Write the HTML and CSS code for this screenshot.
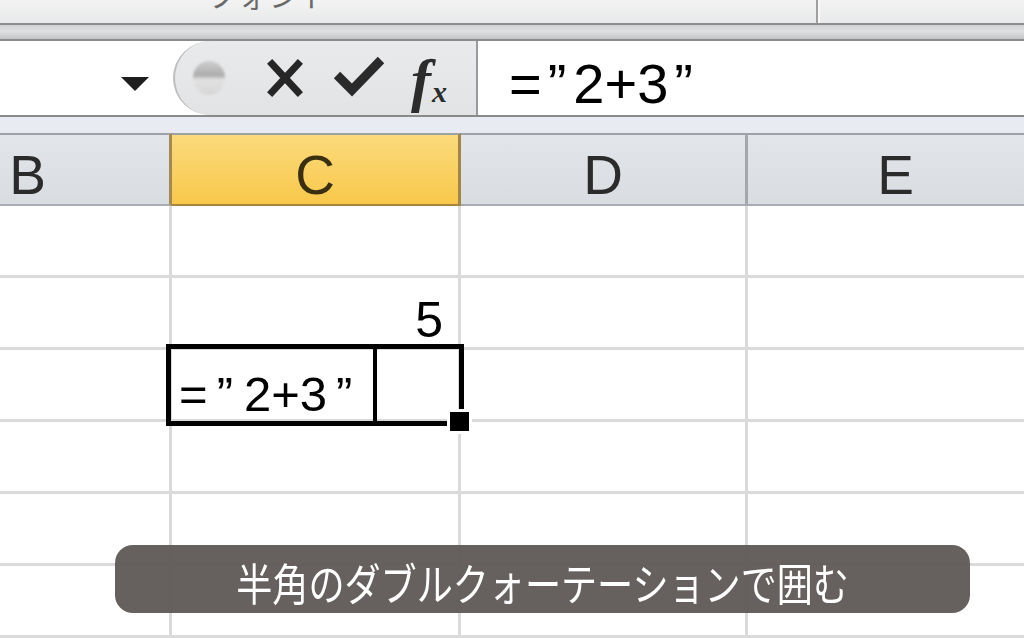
FILE: index.html
```html
<!DOCTYPE html>
<html lang="ja">
<head>
<meta charset="utf-8">
<link rel="stylesheet" href="styles.css">
</head>
<body>
<div class="ribbon">
  <div class="ribbon-left"><span class="ribbon-label">フォント</span></div>
  <div class="ribbon-right"></div>
</div>
<div class="band"></div>
<div class="fbar">
  <div class="namebox">
    <svg class="arrow" width="28" height="14" viewBox="0 0 28 14"><polygon points="0,0 28,0 14,14" fill="#1e1e1e"/></svg>
  </div>
  <div class="btns">
    <span class="grip"></span>
    <svg class="ico-x" width="36" height="38" viewBox="0 0 36 38"><path d="M5 5 L31 33 M31 5 L5 33" stroke="#262626" stroke-width="7" stroke-linecap="square" fill="none"/></svg>
    <svg class="ico-ok" width="52" height="42" viewBox="0 0 52 42"><path d="M4 20 L19 35 L48 5" stroke="#2a2a2a" stroke-width="9" stroke-linejoin="miter" fill="none"/></svg>
    <span class="fx"><span class="fx-f">f</span><span class="fx-x">x</span></span>
  </div>
  <div class="formula">=<span class="q">”</span>2+3<span class="q">”</span></div>
</div>
<div class="band2"></div>
<div class="sheet">
  <div class="hc hb">B</div>
  <div class="hc sel">C</div>
  <div class="hc">D</div>
  <div class="hc">E</div>

  <div class="c"></div><div class="c"></div><div class="c"></div><div class="c"></div>

  <div class="c"></div><div class="c num">5</div><div class="c"></div><div class="c"></div>

  <div class="c"></div>
  <div class="c">
    <div class="selbox">
      <div class="sel-left">=<span class="q2">”</span>2+3<span class="q2">”</span></div>
      <div class="sel-right"></div>
      <span class="handle"></span>
    </div>
  </div>
  <div class="c"></div><div class="c"></div>

  <div class="c"></div><div class="c"></div><div class="c"></div><div class="c"></div>
  <div class="c"></div><div class="c"></div><div class="c"></div><div class="c"></div>
  <div class="c"></div><div class="c"></div><div class="c"></div><div class="c"></div>
</div>
<div class="caption"><span class="caption-text">半角のダブルクォーテーションで囲む</span></div>
</body>
</html>
```

FILE: styles.css
```css
html, body {
  margin: 0;
  padding: 0;
}
body {
  width: 1024px;
  height: 638px;
  overflow: hidden;
  position: relative;
  background: #fff;
  font-family: "Liberation Sans", Arial, sans-serif;
  color: #000;
}

/* ribbon strip */
.ribbon {
  display: flex;
  height: 25px;
  box-sizing: border-box;
  background: linear-gradient(#f3f3f3, #e8e9ea);
  border-bottom: 2px solid #8d8d8d;
  overflow: hidden;
}
.ribbon-left {
  width: 818px;
  flex: none;
  box-sizing: border-box;
  border-right: 2px solid #a0a0a0;
  padding-left: 207px;
  overflow: hidden;
}
.ribbon-label {
  display: block;
  font: 30px/30px "Noto Sans CJK JP", sans-serif;
  color: #6a6a6a;
  margin-top: -21px;
  letter-spacing: 1px;
}
.ribbon-right {
  flex: 1;
  border-left: 2px solid #f8f8f8;
}

.band {
  height: 16px;
  box-sizing: border-box;
  background: linear-gradient(#d0d2d4, #dfe1e3 45%, #c2c4c6);
  border-bottom: 2px solid #8b8b8b;
}

/* formula bar */
.fbar {
  display: flex;
  height: 76px;
  box-sizing: border-box;
  border-bottom: 2px solid #8a8a8a;
  background: #fff;
}
.namebox {
  width: 173px;
  flex: none;
  display: flex;
  justify-content: flex-end;
  align-items: flex-start;
  padding-top: 36px;
  box-sizing: border-box;
}
.arrow {
  margin-right: 24px;
}
.btns {
  width: 305px;
  flex: none;
  box-sizing: border-box;
  background: linear-gradient(#e9eaec, #e2e3e5);
  border-left: 2px solid #bdbdbd;
  border-right: 2px solid #9a9a9a;
  border-radius: 38px 0 0 38px / 37px 0 0 37px;
  display: flex;
  align-items: center;
}
.grip {
  width: 32px;
  height: 34px;
  margin-left: 18px;
  border-radius: 50%;
  background: linear-gradient(#cfcfcf, #adadad 42%, #e2e2e2 55%, #d6d6d6);
  filter: blur(1.2px);
}
.ico-x {
  margin-left: 42px;
}
.ico-ok {
  margin-left: 30px;
  margin-top: -4px;
}
.fx {
  margin-left: 26px;
  display: flex;
  align-items: flex-end;
  font-family: "Liberation Serif", "Times New Roman", serif;
  font-style: italic;
  font-weight: bold;
  color: #2c2c2c;
  height: 52px;
}
.fx-f {
  font-size: 60px;
  line-height: 48px;
}
.fx-x {
  font-size: 30px;
  line-height: 24px;
  margin-left: 1px;
}
.formula {
  flex: 1;
  padding: 15px 0 0 31px;
  font-size: 56px;
  line-height: 1;
}
.q {
  display: inline-block;
  margin: 0 7px 0 6px;
}

.band2 {
  height: 16px;
  background: #e8ecf2;
}

/* sheet grid */
.sheet {
  display: grid;
  grid-template-columns: 286px 289px 287px 1fr;
  width: 1160px;
  margin-left: -114px;
}
.hc {
  height: 73px;
  box-sizing: border-box;
  border-top: 2px solid #9ea2a7;
  border-bottom: 2px solid #a7abb0;
  border-right: 3px solid #a4a8ad;
  background: linear-gradient(#e2e5e9, #d9dce0);
  display: flex;
  justify-content: center;
  padding-top: 13px;
  font-size: 55px;
  line-height: 1;
  color: #2b2b2b;
}
.hc.hb {
  border-right-color: #a38a55;
}
.hc.sel {
  background: linear-gradient(#fbda7c, #f8c84a);
  border-right-color: #a38647;
  border-bottom-color: #a88540;
  color: #3a3010;
}
.c {
  height: 72px;
  box-sizing: border-box;
  border-right: 3px solid #dadada;
  border-bottom: 3px solid #dadada;
  position: relative;
}
.num {
  display: flex;
  justify-content: flex-end;
  align-items: flex-end;
  padding: 0 15px 2px 0;
  font-size: 50px;
  line-height: 1;
}

/* selection */
.selbox {
  position: absolute;
  left: -6px;
  top: -6px;
  width: 298px;
  height: 82px;
  box-sizing: border-box;
  border: 5px solid #000;
  display: flex;
  z-index: 2;
}
.sel-left {
  width: 206px;
  box-sizing: border-box;
  border-right: 4px solid #000;
  padding: 21px 0 0 8px;
  font-size: 49px;
  line-height: 1;
  white-space: nowrap;
}
.q2 {
  display: inline-block;
  margin: 0 11px 0 9px;
}
.sel-right {
  flex: 1;
}
.handle {
  position: absolute;
  right: -13px;
  bottom: -13px;
  width: 25px;
  height: 25px;
  box-sizing: border-box;
  background: #000;
  border: 3px solid #fff;
}

/* caption overlay */
.caption {
  position: absolute;
  left: 115px;
  top: 545px;
  width: 855px;
  height: 68px;
  box-sizing: border-box;
  border-radius: 18px;
  background: rgba(96, 91, 88, 0.96);
  display: flex;
  justify-content: center;
  align-items: center;
  padding-top: 6px;
  z-index: 5;
}
.caption-text {
  display: inline-block;
  color: #fff;
  font-family: "Noto Sans CJK JP", sans-serif;
  font-size: 44px;
  line-height: 1;
  white-space: nowrap;
  transform: scaleX(0.82);
}
```
